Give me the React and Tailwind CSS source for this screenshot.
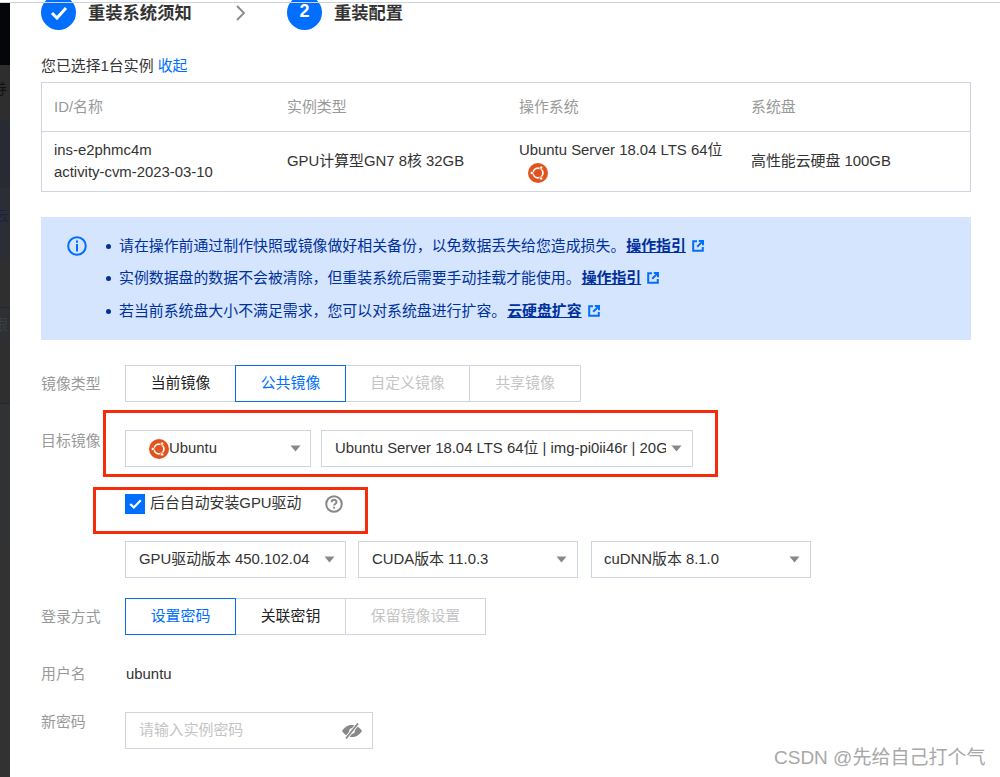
const Caret = () => (
  <svg width="11" height="7" viewBox="0 0 11 7" className="shrink-0">
    <path d="M0.5 0.5h10L5.5 6.5z" fill="#888888" />
  </svg>
);

const UbuntuLogo = ({ size = 20 }) => (
  <svg width={size} height={size} viewBox="0 0 20 20" className="shrink-0">
    <circle cx="10" cy="10" r="10" fill="#e2521d" />
    <circle cx="10" cy="10" r="4.9" fill="none" stroke="#ffffff" strokeWidth="1.7" />
    <circle cx="3.8" cy="10" r="1.7" fill="#ffffff" stroke="#e2521d" strokeWidth="0.8" />
    <circle cx="13.1" cy="4.6" r="1.7" fill="#ffffff" stroke="#e2521d" strokeWidth="0.8" />
    <circle cx="13.1" cy="15.4" r="1.7" fill="#ffffff" stroke="#e2521d" strokeWidth="0.8" />
  </svg>
);

const ExternalIcon = () => (
  <svg width="12" height="12" viewBox="0 0 12 12" className="shrink-0">
    <path d="M5 1.2H1.2v9.6h9.6V7" fill="none" stroke="#006eff" strokeWidth="2" />
    <path d="M6.8 1H11v4.2M10.6 1.4L5.2 6.8" fill="none" stroke="#006eff" strokeWidth="2" />
  </svg>
);

const Select = ({ className, children }) => (
  <div className={`h-[37px] flex items-center border border-[#cfd5de] bg-white ${className}`}>
    {children}
  </div>
);

function SegButton({ active, disabled, className, children }) {
  let cls = "border-[#cfd5de] text-[#222222]";
  if (active) cls = "border-[#0a6ee8] text-[#006eff] z-10";
  if (disabled) cls = "border-[#cfd5de] text-[#c4c4c4]";
  return (
    <div className={`h-[37px] -ml-px first:ml-0 flex items-center justify-center border ${cls} ${className}`}>
      {children}
    </div>
  );
}

function Note({ children, link, className }) {
  return (
    <div className={`flex items-center h-[22px] text-[#00309c] ${className}`}>
      <span className="w-[5px] h-[5px] rounded-full bg-[#00309c] mr-[8px] ml-[1px]" />
      <span>{children}</span>
      <span className="font-bold underline ml-[1px]">{link}</span>
      <span className="ml-[6px]"><ExternalIcon /></span>
    </div>
  );
}

function Sidebar() {
  return (
    <div className="w-[10px] shrink-0 overflow-hidden mt-[3px] text-[15px] leading-[20px] bg-[#323232]">
      <div className="h-[62px] bg-[#05060a]" />
      <div className="h-[55px] bg-[#2e2e2e] pt-[14px] -indent-[8px] text-[#111111]">券</div>
      <div className="h-[68px] bg-[#282b34]" />
      <div className="h-[72px] bg-[#2b2e35] pt-[18px] -indent-[6px] text-[#1b2245]">云</div>
      <div className="h-[48px] bg-[#2f2f2f] border-b border-[#262626]" />
      <div className="h-[34px] bg-[#2e3033] pt-[7px] -indent-[7px] text-[#3a3d42]">限</div>
      <div className="h-[62px] bg-[#2f2f2f] border-b border-[#272727]" />
      <div className="h-[140px] bg-[#303234]" />
    </div>
  );
}

export default function App() {
  return (
    <div className="relative w-[1000px] h-[777px] overflow-hidden bg-white flex text-[14.9px] text-[#333333] font-['Liberation_Sans','Noto_Sans_CJK_SC',sans-serif]">
      <div className="absolute left-0 right-0 top-[2px] h-px bg-[#cfd2d8]" />
      <Sidebar />

      <div className="flex-1 pl-[31px] pr-[29px]">
        {/* steps */}
        <div className="flex items-center h-[35px] -mt-[5px]">
          <div className="w-[35px] h-[35px] rounded-full bg-[#006eff] flex items-center justify-center">
            <svg width="18" height="14" viewBox="0 0 18 14">
              <path d="M2 7l5 5 9-10" fill="none" stroke="#ffffff" strokeWidth="3" />
            </svg>
          </div>
          <div className="ml-3 pt-[2px] text-[17.3px] font-bold text-[#333333] w-[148px]">重装系统须知</div>
          <svg width="10" height="16" viewBox="0 0 10 16">
            <path d="M1 1l7 7-7 7" fill="none" stroke="#8a8a8a" strokeWidth="1.8" />
          </svg>
          <div className="ml-[41px] w-[35px] h-[35px] rounded-full bg-[#006eff] flex items-center justify-center text-white font-bold text-[18px] pb-[2px]">2</div>
          <div className="ml-3 pt-[2px] text-[17.3px] font-bold text-[#333333]">重装配置</div>
        </div>

        <div className="mt-[24px] h-[22px] leading-[24px]">
          您已选择1台实例 <span className="text-[#006eff]">收起</span>
        </div>

        {/* instance table */}
        <div className="mt-[6px] border border-[#cfd5de] h-[110px]">
          <div className="grid grid-cols-[233px_232px_232px_1fr] h-[49px] items-center border-b border-[#cfd5de] pl-3 text-[#999999]">
            <div>ID/名称</div>
            <div>实例类型</div>
            <div>操作系统</div>
            <div>系统盘</div>
          </div>
          <div className="grid grid-cols-[233px_232px_232px_1fr] h-[59px] pb-[2px] items-center pl-3 leading-[22px]">
            <div>
              <div>ins-e2phmc4m</div>
              <div>activity-cvm-2023-03-10</div>
            </div>
            <div>GPU计算型GN7 8核 32GB</div>
            <div>
              <div>Ubuntu Server 18.04 LTS 64位</div>
              <div className="pl-[9px] pt-[2px] h-[22px] flex items-center"><UbuntuLogo /></div>
            </div>
            <div>高性能云硬盘 100GB</div>
          </div>
        </div>

        {/* notice */}
        <div className="mt-[25px] h-[123px] bg-[#d4e5fd] pl-[26px] pt-[18px] flex">
          <svg width="20" height="20" viewBox="0 0 20 20" className="shrink-0 mt-[1px]">
            <circle cx="10" cy="10" r="8.8" fill="none" stroke="#006eff" strokeWidth="2" />
            <rect x="9" y="4.5" width="2" height="2.2" fill="#006eff" />
            <rect x="9" y="8" width="2" height="7.5" fill="#006eff" />
          </svg>
          <div className="ml-[18px]">
            <Note link="操作指引">请在操作前通过制作快照或镜像做好相关备份，以免数据丢失给您造成损失。</Note>
            <Note link="操作指引" className="mt-[10px]">实例数据盘的数据不会被清除，但重装系统后需要手动挂载才能使用。</Note>
            <Note link="云硬盘扩容" className="mt-[11px]">若当前系统盘大小不满足需求，您可以对系统盘进行扩容。</Note>
          </div>
        </div>

        {/* image type */}
        <div className="mt-[25px] flex items-center">
          <div className="w-[84px] mt-[1px] text-[#999999]">镜像类型</div>
          <div className="flex">
            <SegButton className="w-[111px]">当前镜像</SegButton>
            <SegButton active className="w-[111px]">公共镜像</SegButton>
            <SegButton disabled className="w-[125px]">自定义镜像</SegButton>
            <SegButton disabled className="w-[112px]">共享镜像</SegButton>
          </div>
        </div>

        {/* target image */}
        <div className="mt-[28px] flex items-start">
          <div className="w-[84px] text-[#999999]">目标镜像</div>
          <div className="flex gap-[10px]">
            <Select className="w-[186px] pl-[23px] pr-[9px]">
              <UbuntuLogo />
              <span className="flex-1">Ubuntu</span>
              <Caret />
            </Select>
            <Select className="w-[372px] pl-[13px] pr-[10px]">
              <span className="flex-1 min-w-0 overflow-hidden whitespace-nowrap">Ubuntu Server 18.04 LTS 64位 | img-pi0ii46r | 20GB</span>
              <span className="ml-[5px]"><Caret /></span>
            </Select>
          </div>
        </div>

        {/* gpu driver */}
        <div className="mt-[27px] ml-[84px] h-[20px] flex items-center">
          <div className="w-[20px] h-[20px] bg-[#006eff] flex items-center justify-center">
            <svg width="13" height="10" viewBox="0 0 13 10">
              <path d="M1.2 5l3.6 3.4L11.8 1.2" fill="none" stroke="#ffffff" strokeWidth="2.2" />
            </svg>
          </div>
          <span className="ml-[5px] w-[175px] -mt-[1px]">后台自动安装GPU驱动</span>
          <svg width="18" height="18" viewBox="0 0 18 18">
            <circle cx="9" cy="9" r="7.8" fill="none" stroke="#888888" strokeWidth="2" />
            <path d="M6.6 7.2c0-3.200 4.900-3.200 4.900-.2 0 1.900-2.500 1.900-2.500 3.600" fill="none" stroke="#888888" strokeWidth="1.9" />
            <rect x="8.1" y="11.8" width="1.8" height="1.9" fill="#888888" />
          </svg>
        </div>

        <div className="mt-[27px] ml-[84px] flex">
          <Select className="w-[221px] pl-[13px] pr-[10px] justify-between">
            <span>GPU驱动版本 450.102.04</span>
            <Caret />
          </Select>
          <Select className="ml-[12px] w-[220px] pl-[13px] pr-[10px] justify-between">
            <span>CUDA版本 11.0.3</span>
            <Caret />
          </Select>
          <Select className="ml-[13px] w-[220px] pl-[12px] pr-[10px] justify-between">
            <span>cuDNN版本 8.1.0</span>
            <Caret />
          </Select>
        </div>

        {/* login */}
        <div className="mt-[20px] flex items-center">
          <div className="w-[84px] mt-[2px] text-[#999999]">登录方式</div>
          <div className="flex">
            <SegButton active className="w-[111px]">设置密码</SegButton>
            <SegButton className="w-[111px]">关联密钥</SegButton>
            <SegButton disabled className="w-[141px]">保留镜像设置</SegButton>
          </div>
        </div>

        <div className="mt-[28px] h-[22px] flex items-center">
          <div className="w-[84px] text-[#999999]">用户名</div>
          <div className="ml-[1px]">ubuntu</div>
        </div>

        <div className="mt-[27px] flex items-start">
          <div className="w-[84px] -mt-[1px] text-[#999999]">新密码</div>
          <div className="w-[248px] h-[37px] border border-[#cfd5de] flex items-center justify-between pl-[13px] pr-[10px] text-[#c4c4c4]">
            <span>请输入实例密码</span>
            <svg width="20" height="16" viewBox="0 0 20 16">
              <path d="M0 8c3-4.400 6.200-6 10-6s7 1.600 10 6c-3 4.400-6.200 6-10 6S3 12.400 0 8z" fill="#888888" />
              <circle cx="10" cy="8" r="2.800" fill="#ffffff" />
              <path d="M4 15.500L16 .5" stroke="#ffffff" strokeWidth="3.600" />
              <path d="M4 15.500L16 .5" stroke="#888888" strokeWidth="1.800" />
            </svg>
          </div>
        </div>
      </div>

      {/* red annotation boxes */}
      <div className="absolute left-[103px] top-[410px] w-[615px] h-[67px] border-[3px] border-[#f52b0e]" />
      <div className="absolute left-[93px] top-[487px] w-[275px] h-[47px] border-[3px] border-[#f52b0e]" />

      <div className="absolute left-[774px] top-[745px] text-[19px] leading-[26px] text-[#a8a8a8]">CSDN @先给自己打个气</div>
    </div>
  );
}
